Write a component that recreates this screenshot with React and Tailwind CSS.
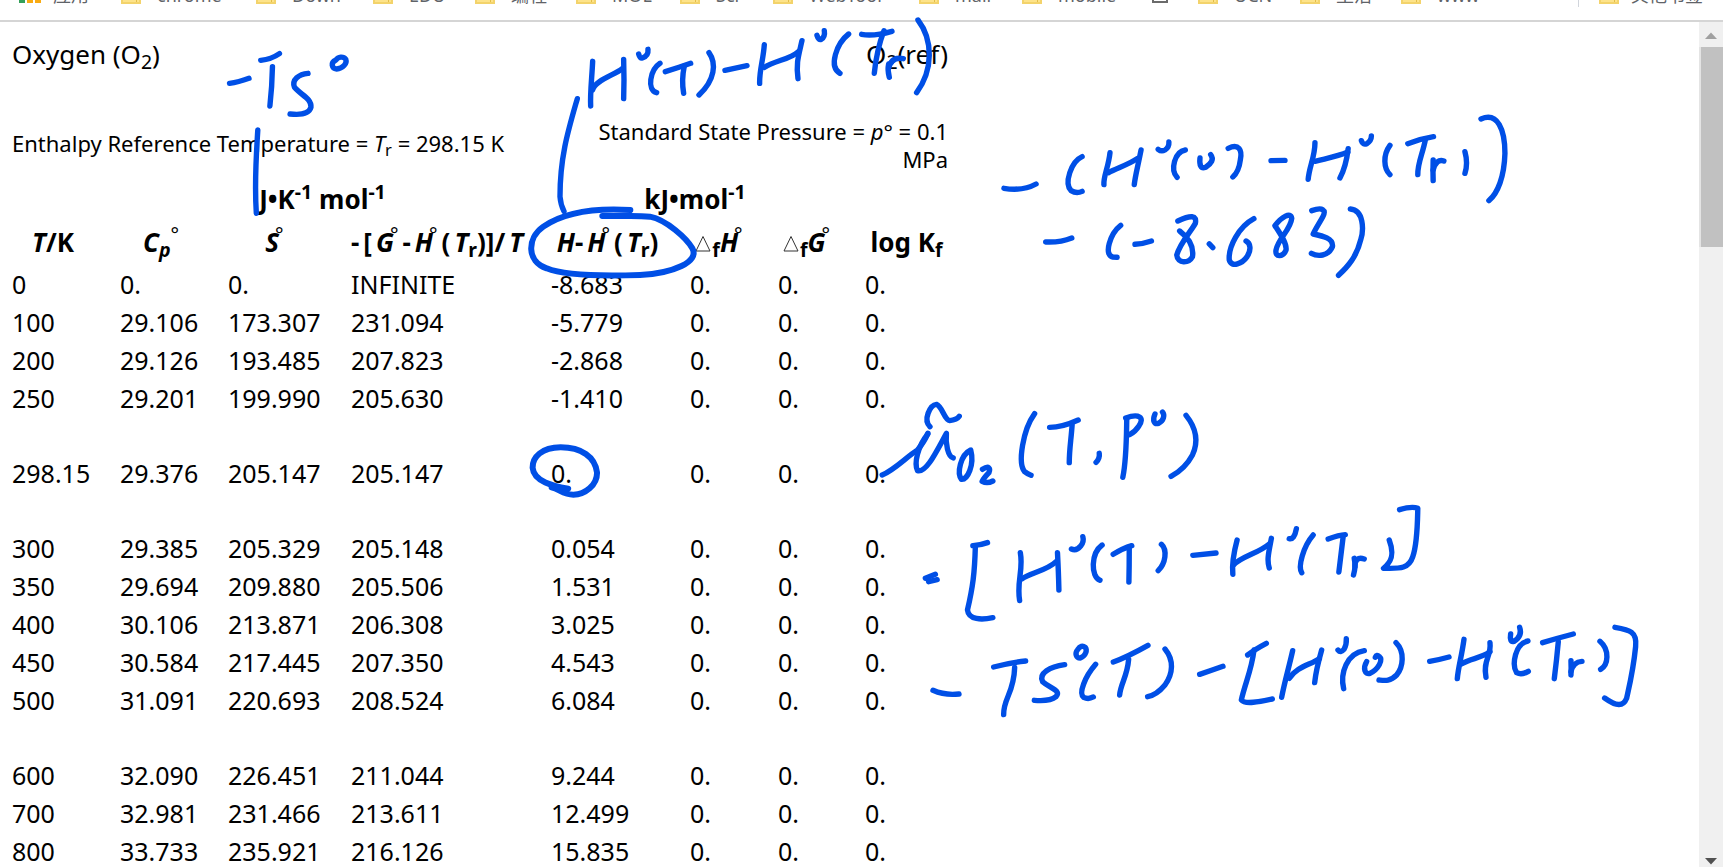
const bookmarks = [
  { label: "chrome", width: "w-[135px]" },
  { label: "Down", width: "w-[117px]" },
  { label: "EDU", width: "w-[102px]" },
  { label: "编程", width: "w-[101px]" },
  { label: "MOE", width: "w-[104px]" },
  { label: "Sci", width: "w-[93px]" },
  { label: "WebTool", width: "w-[146px]" },
  { label: "mail", width: "w-[103px]" },
  { label: "mobile", width: "w-[128px]" },
  { label: "", width: "w-[48px]", page: true },
  { label: "UCN", width: "w-[102px]" },
  { label: "生活", width: "w-[101px]" },
  { label: "www", width: "w-[104px]" },
];

const rows = [
  ["0", "0.", "0.", "INFINITE", "-8.683"],
  ["100", "29.106", "173.307", "231.094", "-5.779"],
  ["200", "29.126", "193.485", "207.823", "-2.868"],
  ["250", "29.201", "199.990", "205.630", "-1.410"],
  null,
  ["298.15", "29.376", "205.147", "205.147", "0."],
  null,
  ["300", "29.385", "205.329", "205.148", "0.054"],
  ["350", "29.694", "209.880", "205.506", "1.531"],
  ["400", "30.106", "213.871", "206.308", "3.025"],
  ["450", "30.584", "217.445", "207.350", "4.543"],
  ["500", "31.091", "220.693", "208.524", "6.084"],
  null,
  ["600", "32.090", "226.451", "211.044", "9.244"],
  ["700", "32.981", "231.466", "213.611", "12.499"],
  ["800", "33.733", "235.921", "216.126", "15.835"],
];

// Pen strokes, grouped by note; every note has its own origin and grid.
const notes = [
  {
    at: "translate(0 0) scale(0.3667 0.3333)",
    strokes: [
      "M626 250 Q650 247 679 235",
      "M711 181 Q740 178 762 161",
      "M743 200 Q742 260 736 318",
      "M840 220 C815 222 795 240 803 262 C820 285 850 295 848 322 C842 345 815 345 791 342",
      "M916 180 C900 188 905 206 918 207 C935 206 947 190 943 178 C936 168 922 170 916 180Z",
      "M703 390 C700 450 693 540 699 640",
    ],
  },
  {
    at: "translate(500 0) scale(0.3333)",
    strokes: [
      "M232 296 C205 390 180 470 180 590 Q182 615 192 634",
      "M278 184 C276 230 270 280 272 318",
      "M278 270 C285 240 345 225 367 206",
      "M371 178 Q373 240 371 296",
      "M416 162 Q420 176 427 174 Q446 168 444 148",
      "M480 190 C450 210 440 270 470 278",
      "M496 215 Q530 205 572 190",
      "M553 198 Q544 240 551 280",
      "M627 158 C650 190 645 240 597 285",
      "M675 211 L741 197",
      "M793 134 C790 180 778 210 779 250",
      "M793 202 C830 180 870 178 895 155",
      "M906 122 C895 170 888 190 894 236",
      "M951 106 Q956 122 964 118 Q976 110 973 92",
      "M1046 102 C1010 130 985 200 1020 220",
      "M1085 103 Q1120 110 1176 94",
      "M1152 92 Q1130 150 1123 220",
      "M1166 192 Q1162 210 1168 232",
      "M1166 205 Q1175 168 1210 176",
      "M1254 60 C1300 120 1300 210 1250 278",
    ],
  },
  {
    at: "translate(500 0) scale(0.3333)",
    bold: true,
    strokes: [
      "M391 630 C260 622 180 645 130 680 C80 715 80 785 140 805 C200 830 330 828 420 825 C520 820 600 785 577 745 C560 715 500 660 450 650 C400 645 350 650 307 648",
    ],
  },
  {
    at: "translate(0 400) scale(0.3954 0.3333)",
    bold: true,
    strokes: [
      "M1437 266 C1400 258 1350 245 1347 203 C1347 170 1370 143 1418 142 C1470 142 1505 170 1510 218 C1510 255 1480 284 1450 284 C1425 284 1415 268 1395 262",
    ],
  },
  {
    at: "translate(980 90) scale(0.3571 0.3333)",
    strokes: [
      "M67 295 Q120 304 157 282",
      "M286 200 C255 215 235 280 255 302 Q270 312 286 304",
      "M364 188 C360 230 345 260 347 284",
      "M360 248 C380 235 415 225 440 206",
      "M451 180 C442 230 435 255 432 284",
      "M499 178 Q508 186 518 180 Q530 172 529 156",
      "M575 180 C545 185 532 240 552 262",
      "M616 204 C614 225 618 238 632 232 C648 220 656 208 646 194",
      "M695 175 C725 160 735 180 729 210 Q725 245 708 261",
      "M815 212 L854 211",
      "M938 158 C938 200 922 230 919 268",
      "M938 214 C970 205 1000 200 1030 186",
      "M1031 176 Q1025 230 1008 264",
      "M1068 152 Q1072 166 1083 161 Q1096 152 1096 138",
      "M1148 166 C1128 195 1130 235 1148 254",
      "M1198 161 Q1235 146 1270 140",
      "M1247 150 C1240 190 1225 220 1226 254",
      "M1269 210 Q1268 245 1269 272",
      "M1269 240 Q1278 205 1299 213",
      "M1358 185 Q1367 220 1358 250",
      "M1403 87 C1450 65 1470 120 1470 190 C1468 260 1450 310 1425 332",
      "M184 456 Q225 458 257 444",
      "M394 406 C365 430 345 495 372 501 L384 502",
      "M434 463 Q455 462 480 453",
      "M554 393 C590 375 608 375 603 400 C590 425 560 460 551 495 C553 522 585 520 595 500 C600 465 580 440 559 423",
      "M642 462 L652 473",
      "M767 386 C725 410 695 470 698 510 C705 535 735 520 748 500 C760 480 758 460 745 453",
      "M826 407 C840 430 860 460 857 480 C850 500 825 505 829 480 C835 445 870 420 873 385 C870 365 845 380 826 407",
      "M929 362 C960 350 970 360 960 380 C950 400 940 415 933 432 C960 438 990 445 987 470 C975 500 945 500 928 490",
      "M1037 357 C1075 360 1075 420 1066 450 C1055 500 1030 530 1004 556",
    ],
  },
  {
    at: "translate(880 390) scale(0.3571 0.3333)",
    strokes: [
      "M6 255 C40 240 75 200 105 180 Q125 155 134 130",
      "M134 132 C105 170 95 220 105 242 C130 250 160 180 186 130 C183 160 190 200 205 204",
      "M140 110 C120 90 140 45 158 43 C175 50 180 90 195 92 Q215 90 222 79",
      "M254 180 C225 195 215 250 228 268 C245 270 265 225 254 180Z",
      "M287 238 C305 225 310 235 305 248 Q290 265 286 274 Q300 282 316 273",
      "M433 71 C400 120 385 220 405 245 Q413 252 423 256",
      "M475 112 Q510 112 555 90",
      "M538 105 C535 150 530 180 530 218",
      "M614 190 Q616 205 605 217",
      "M691 88 C690 150 690 210 680 262",
      "M688 84 C725 70 742 82 725 108 Q715 125 699 134",
      "M770 72 C762 92 768 104 780 100 C795 92 798 75 791 66",
      "M857 76 C890 120 890 160 875 195 C860 225 840 245 815 259",
      "M127 565 L155 553",
      "M136 575 L160 569",
      "M260 467 Q280 466 301 458",
      "M267 470 C265 550 260 590 245 660 C248 690 285 690 316 683",
      "M393 488 C402 540 382 575 391 632",
      "M398 566 C420 550 470 540 494 514",
      "M497 488 Q500 550 501 600",
      "M536 477 Q550 484 562 468 Q572 455 568 440",
      "M622 465 C590 490 590 560 616 571",
      "M653 493 Q680 475 705 467",
      "M698 475 Q698 530 697 576",
      "M788 463 C805 480 800 520 779 542",
      "M876 496 L941 489",
      "M1000 450 C990 490 985 520 988 553",
      "M990 525 C1010 500 1060 490 1090 462",
      "M1096 445 C1088 490 1083 510 1090 534",
      "M1146 446 Q1160 450 1166 416",
      "M1213 435 C1185 470 1170 530 1181 548",
      "M1255 447 Q1285 435 1303 434",
      "M1297 440 Q1290 500 1285 546",
      "M1328 505 Q1333 530 1326 555",
      "M1330 530 Q1330 498 1356 507",
      "M1426 450 C1440 490 1435 515 1410 535 C1450 535 1480 540 1492 500 C1505 460 1505 400 1506 355 Q1490 348 1455 359",
    ],
  },
  {
    at: "translate(900 610) scale(0.3333)",
    strokes: [
      "M99 241 Q135 257 177 252",
      "M281 171 Q330 158 377 153",
      "M344 172 C342 250 310 265 311 314",
      "M494 164 C450 170 415 190 428 215 C450 235 485 240 468 260 Q450 275 403 271",
      "M533 119 C524 130 528 144 541 144 C558 138 562 120 556 112 C548 106 540 108 533 119Z",
      "M587 163 C555 200 535 250 551 262 Q565 269 580 261",
      "M640 156 C670 145 710 125 744 106",
      "M686 148 C682 200 662 220 659 255",
      "M795 117 C822 150 820 190 795 225 Q770 255 743 260",
      "M899 193 Q930 183 969 169",
    ],
  },
  {
    at: "translate(1230 610) scale(0.3333)",
    strokes: [
      "M53 135 Q75 118 109 100",
      "M72 120 C65 180 45 220 34 270 C45 285 90 275 127 267",
      "M188 122 C175 180 165 210 155 262",
      "M178 205 C200 170 240 165 268 146",
      "M275 120 Q258 180 254 218",
      "M324 120 Q332 130 342 118 Q350 105 349 86",
      "M403 122 C350 130 330 190 341 236",
      "M410 155 C398 175 405 195 420 190 C445 178 460 150 448 140 Q440 132 436 142",
      "M498 98 C525 125 520 170 500 195 C480 215 465 212 447 210",
      "M599 154 Q625 150 657 141",
      "M702 88 C695 140 685 170 682 206",
      "M694 162 C720 145 755 145 780 125",
      "M780 98 C785 140 758 150 768 202",
      "M842 72 Q838 98 852 94 Q878 78 869 52",
      "M894 93 C855 100 845 165 860 188 Q875 196 895 184",
      "M938 98 Q980 85 1030 72",
      "M985 95 Q980 150 973 206",
      "M1023 152 Q1024 175 1023 195",
      "M1023 185 Q1030 155 1056 154",
      "M1110 94 C1140 120 1135 165 1112 178",
      "M1155 52 C1200 60 1222 65 1217 110 C1210 180 1200 220 1190 265 C1180 290 1160 290 1124 264",
    ],
  },
];

function Folder() {
  return (
    <svg width="20" height="18" viewBox="0 0 20 18" aria-hidden="true" className="shrink-0">
      <path d="M1 2h7l2 2h9v13H1z" fill="#fde38a" stroke="#f3d36b" strokeWidth="2" />
      <path d="M15.500 12v4" stroke="#e3bd4a" strokeWidth="1" />
    </svg>
  );
}

function BookmarkBar() {
  return (
    <header className="h-[22px] shrink-0 overflow-hidden border-b-2 border-[#d5d5d5] bg-white">
      <nav
        aria-label="书签"
        className="-mt-[17px] flex h-6 items-center pl-[19px] pr-5 text-lg leading-6 text-[#5f6368]"
      >
        <a href="#apps" className="flex w-[102px] shrink-0 items-center gap-3 whitespace-nowrap">
          <svg width="22" height="18" viewBox="0 0 22 18" aria-hidden="true">
            <path d="M0 11h6v6H0z" fill="#34a05a" />
            <path d="M8 11h6v6H8zM16 11h6v6h-6z" fill="#f9ab12" />
          </svg>
          应用
        </a>
        {bookmarks.map((b, i) => (
          <a key={i} href="#bookmark" aria-label={b.label || "page"} className={"flex shrink-0 items-center gap-4 whitespace-nowrap " + b.width}>
            {b.page ? (
              <svg width="20" height="18" viewBox="0 0 20 18" aria-hidden="true">
                <path d="M3 1h14v15H3z" fill="#fff" stroke="#6b6b6b" strokeWidth="2" />
              </svg>
            ) : (
              <Folder />
            )}
            {b.label}
          </a>
        ))}
        <a href="#other" className="ml-auto flex shrink-0 items-center gap-3 whitespace-nowrap border-l border-gray-300 pl-5">
          <Folder />
          其他书签
        </a>
      </nav>
    </header>
  );
}

function Deg() {
  return <sup className="-ml-1 mr-1 text-xl font-normal not-italic">°</sup>;
}

function Delta() {
  return (
    <svg width="17" height="17" viewBox="0 0 17 17" role="img" aria-label="Δ" className="inline-block align-baseline">
      <path d="M1 16L8 1.500L15 16Z" fill="none" stroke="#333" strokeWidth="1" />
    </svg>
  );
}

function Scrollbar() {
  return (
    <div aria-hidden="true" className="flex w-6 shrink-0 flex-col items-center bg-[#f0f0f0]">
      <svg width="24" height="25" viewBox="0 0 24 25" className="shrink-0">
        <path d="M6 17L12 10.500L18 17Z" fill="#a0a0a0" />
      </svg>
      <div className="h-[200px] w-full border-l-2 border-[#e4e4e4] bg-[#c1c1c1]" />
      <svg width="24" height="17" viewBox="0 0 24 17" className="mt-auto shrink-0">
        <path d="M6 8L12 14.500L18 8Z" fill="#505050" />
      </svg>
    </div>
  );
}

function Ink() {
  return (
    <svg
      role="img"
      aria-label="Handwritten notes"
      className="pointer-events-none absolute inset-0 size-full"
      fill="none"
      stroke="#004fe6"
      strokeLinecap="round"
      strokeLinejoin="round"
    >
      {notes.map((note, i) => (
        <g key={i} transform={note.at} strokeWidth={note.bold ? 6 : 5.4}>
          {note.strokes.map((d) => (
            <path key={d} d={d} vectorEffect="non-scaling-stroke" />
          ))}
        </g>
      ))}
    </svg>
  );
}

export default function App() {
  return (
    <div className="relative flex h-screen flex-col overflow-hidden bg-white font-['Noto_Sans','Noto_Sans_CJK_SC',sans-serif] text-black">
      <BookmarkBar />
      <div className="flex min-h-0 flex-1">
        <main className="min-w-0 flex-1 overflow-hidden px-3 pt-[13px]">
          <div className="w-[936px] max-w-full">
            <div className="flex justify-between text-[26px] leading-[38px]">
              <h1>
                Oxygen (O<sub>2</sub>)
              </h1>
              <p>
                O<sub>2</sub>(ref)
              </p>
            </div>
            <div className="mt-11 flex items-center justify-between text-[22px] leading-7">
              <p className="pb-1">
                Enthalpy Reference Temperature = <i>T</i>
                <sub>r</sub> = 298.15 K
              </p>
              <p className="w-[350px] text-right">
                Standard State Pressure = <i>p</i>° = 0.1 MPa
              </p>
            </div>
            <table className="w-full table-fixed text-left text-[25px] leading-[38px]">
              <colgroup>
                <col className="w-[108px]" />
                <col className="w-[108px]" />
                <col className="w-[123px]" />
                <col className="w-[200px]" />
                <col className="w-[139px]" />
                <col className="w-[88px]" />
                <col className="w-[87px]" />
                <col className="w-[83px]" />
              </colgroup>
              <thead className="whitespace-nowrap text-center text-[26px]">
                <tr className="h-[46px]">
                  <td />
                  <th colSpan="3" className="p-0 pr-[26px] pt-1.5 align-middle">
                    J•K<sup>-1</sup> mol<sup>-1</sup>
                  </th>
                  <th colSpan="3" className="p-0 pr-[26px] pt-1.5 align-middle">
                    kJ•mol<sup>-1</sup>
                  </th>
                  <td />
                </tr>
                <tr className="h-[46px]">
                  <th className="p-0 pr-[26px] align-middle">
                    <i>T</i>/K
                  </th>
                  <th className="p-0 pr-[26px] align-middle">
                    <i>
                      C<sub>p</sub>
                    </i>
                    <sup className="text-xl font-normal">°</sup>
                  </th>
                  <th className="p-0 pr-[26px] align-middle">
                    <i>S</i>
                    <Deg />
                  </th>
                  <th className="p-0 text-left align-middle">
                    -<span className="mx-1">[</span>
                    <i>G</i>
                    <Deg />-<i className="ml-1">H</i>
                    <Deg />(<i className="ml-1">T</i>
                    <sub>r</sub>)]/<i className="ml-1">T</i>
                  </th>
                  <th className="p-0 pr-[26px] align-middle">
                    <i>H</i>-<i className="ml-1">H</i>
                    <Deg />(<i className="ml-1">T</i>
                    <sub>r</sub>)
                  </th>
                  <th className="p-0 pr-[26px] align-middle">
                    <Delta />
                    <sub>f</sub>
                    <i>H</i>
                    <Deg />
                  </th>
                  <th className="p-0 pr-[26px] align-middle">
                    <Delta />
                    <sub>f</sub>
                    <i>G</i>
                    <Deg />
                  </th>
                  <th className="p-0 align-middle">
                    log K<sub>f</sub>
                  </th>
                </tr>
              </thead>
              <tbody>
                {rows.map((row, i) =>
                  row ? (
                    <tr key={i} className="h-[38px]">
                      {[...row, "0.", "0.", "0."].map((value, j) => (
                        <td key={j} className="p-0">
                          {value}
                        </td>
                      ))}
                    </tr>
                  ) : (
                    <tr key={i} className="h-[37px]">
                      <td colSpan="8" className="p-0" />
                    </tr>
                  )
                )}
              </tbody>
            </table>
          </div>
        </main>
        <Scrollbar />
      </div>
      <Ink />
    </div>
  );
}
